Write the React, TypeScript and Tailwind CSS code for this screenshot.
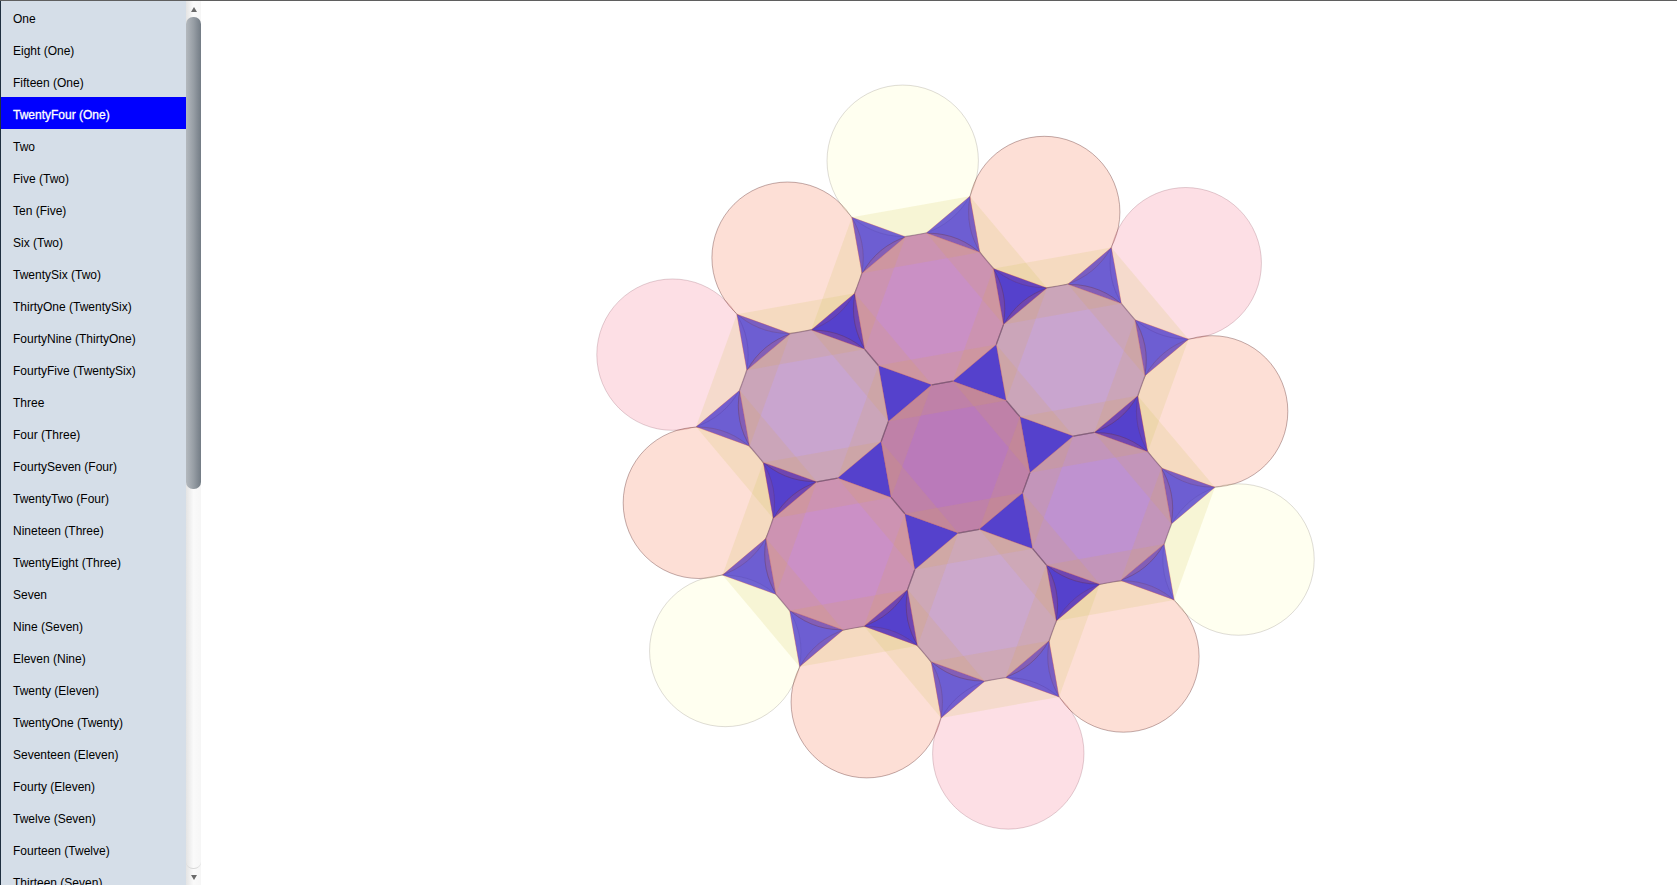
import React from 'react'

// lattice of the tiling, measured off the screenshot
const CX = 955.5
const CY = 457.1
const STEP = 150.5
const ROT = 19.9
const DELTA = 8
const R = STEP / 2 / Math.cos((DELTA * Math.PI) / 180)

type Pt = [number, number]

const polar = (c: Pt, r: number, deg: number): Pt => [
  c[0] + r * Math.cos((deg * Math.PI) / 180),
  c[1] + r * Math.sin((deg * Math.PI) / 180),
]
const pts = (list: Pt[]) => list.map((p) => `${p[0].toFixed(2)},${p[1].toFixed(2)}`).join(' ')

const AXES: Pt[] = [
  [1, 0],
  [0, 1],
  [-1, 1],
  [-1, 0],
  [0, -1],
  [1, -1],
]
const dirOf = (k: number) => ROT + 60 * k

function center(i: number, j: number): Pt {
  const a = polar([0, 0], STEP, ROT)
  const b = polar([0, 0], STEP, ROT + 60)
  return [CX + a[0] * i + b[0] * j, CY + a[1] * i + b[1] * j]
}
const ring = (i: number, j: number) => Math.max(Math.abs(i), Math.abs(j), Math.abs(i + j))
const key = (i: number, j: number) => `${i}:${j}`

type Kind = 'peach' | 'pink' | 'yellow'
function outerKind(i: number, j: number): Kind {
  if ((i === 2 && j === 0) || (i === -2 && j === 2) || (i === 0 && j === -2)) return 'yellow'
  if ((i === -2 && j === 0) || (i === 0 && j === 2) || (i === 2 && j === -2)) return 'pink'
  return 'peach'
}

const KIND: Record<Kind, { fill: string; stroke: string; sliver: string; edge: string }> = {
  peach: {
    fill: 'rgba(245,95,50,0.2)',
    stroke: 'rgba(95,45,45,0.38)',
    sliver: 'rgba(245,95,50,0.1)',
    edge: 'rgba(95,45,45,0.18)',
  },
  pink: {
    fill: 'rgba(245,95,125,0.2)',
    stroke: 'rgba(120,50,70,0.22)',
    sliver: 'rgba(245,95,125,0.04)',
    edge: 'rgba(60,40,120,0.16)',
  },
  yellow: {
    fill: 'rgba(255,255,180,0.2)',
    stroke: 'rgba(90,80,70,0.2)',
    sliver: 'rgba(255,255,180,0.03)',
    edge: 'rgba(60,40,120,0.12)',
  },
}

const HEX: Record<string, string> = {
  '0:0': '#ba7aba',
  '0:-1': '#ca90c5',
  '1:-1': '#c9a5cf',
  '1:0': '#bf92d0',
  '0:1': '#cca8cc',
  '-1:1': '#cb90c6',
  '-1:0': '#c9a5cf',
}

const cells: { i: number; j: number; c: Pt; ring: number }[] = []
for (let i = -2; i <= 2; i++) {
  for (let j = -2; j <= 2; j++) {
    if (ring(i, j) <= 2) cells.push({ i, j, c: center(i, j), ring: ring(i, j) })
  }
}
const has = new Set(cells.map((c) => key(c.i, c.j)))

function dodecagon(c: Pt): Pt[] {
  const out: Pt[] = []
  for (let k = 0; k < 6; k++) {
    out.push(polar(c, R, dirOf(k) - DELTA), polar(c, R, dirOf(k) + DELTA))
  }
  return out
}

const rects: Pt[][] = []
cells.forEach((p) => {
  ;[0, 1, 2].forEach((k) => {
    const ni = p.i + AXES[k][0]
    const nj = p.j + AXES[k][1]
    if (!has.has(key(ni, nj))) return
    if (p.ring === 2 && ring(ni, nj) === 2) return
    const q = center(ni, nj)
    const phi = dirOf(k)
    rects.push([
      polar(p.c, R, phi - 60 + DELTA),
      polar(p.c, R, phi + 60 - DELTA),
      polar(q, R, phi + 180 - 60 + DELTA),
      polar(q, R, phi + 180 + 60 - DELTA),
    ])
  })
})

const tris: { v: Pt[]; core: boolean; light: boolean }[] = []
cells.forEach((p) => {
  ;[0, 1].forEach((k) => {
    const a = AXES[k]
    const b = AXES[k + 1]
    const qi = p.i + a[0]
    const qj = p.j + a[1]
    const si = p.i + b[0]
    const sj = p.j + b[1]
    if (!has.has(key(qi, qj)) || !has.has(key(si, sj))) return
    const phi = dirOf(k)
    const q = center(qi, qj)
    const rings = [p.ring, ring(qi, qj), ring(si, sj)]
    const outerCount = rings.filter((x) => x === 2).length
    tris.push({
      v: [polar(p.c, R, phi + DELTA), polar(p.c, R, phi + 60 - DELTA), polar(q, R, phi + 120 + DELTA)],
      core: rings.includes(0),
      light: outerCount === 2,
    })
  })
})

const inner = cells.filter((c) => c.ring < 2)
const outer = cells.filter((c) => c.ring === 2)

function Tiling() {
  return (
    <svg className="block h-full w-full" viewBox="201 1 1476 884">
      <defs>
        <clipPath id="cells">
          {inner.map((c) => (
            <polygon key={key(c.i, c.j)} points={pts(dodecagon(c.c))} />
          ))}
        </clipPath>
        <clipPath id="outerTris">
          {tris.filter((t) => !t.core).map((t, n) => (
            <polygon key={n} points={pts(t.v)} />
          ))}
        </clipPath>
      </defs>

      {outer.map((c) => {
        const k = KIND[outerKind(c.i, c.j)]
        return <circle key={key(c.i, c.j)} cx={c.c[0]} cy={c.c[1]} r={R - 0.3} fill={k.fill} stroke={k.stroke} />
      })}

      {rects.map((r, n) => (
        <polygon key={n} points={pts(r)} fill="rgba(205,195,85,0.17)" />
      ))}

      {inner.map((c) => (
        <polygon key={key(c.i, c.j)} points={pts(dodecagon(c.c))} fill={HEX[key(c.i, c.j)]} />
      ))}

      <g clipPath="url(#cells)">
        {rects.map((r, n) => (
          <polygon key={n} points={pts(r)} fill="rgba(215,165,75,0.16)" />
        ))}
      </g>

      {tris.map((t, n) => (
        <polygon
          key={n}
          points={pts(t.v)}
          fill={t.light ? '#6d5ed2' : '#5541cc'}
          stroke="rgba(235,70,40,0.5)"
          strokeWidth={0.5}
        />
      ))}

      <g clipPath="url(#outerTris)">
        {outer.map((c) => {
          const k = KIND[outerKind(c.i, c.j)]
          return <circle key={key(c.i, c.j)} cx={c.c[0]} cy={c.c[1]} r={R - 0.3} fill={k.sliver} stroke={k.edge} />
        })}
        {inner
          .filter((c) => c.ring === 1)
          .map((c) => (
            <circle
              key={key(c.i, c.j)}
              cx={c.c[0]}
              cy={c.c[1]}
              r={R - 0.3}
              fill="rgba(245,95,50,0.17)"
              stroke="rgba(95,45,45,0.3)"
            />
          ))}
      </g>

      {inner.map((c) =>
        [0, 1, 2, 3, 4, 5].map((k) => {
          const a = polar(c.c, R, dirOf(k) - DELTA)
          const b = polar(c.c, R, dirOf(k) + DELTA)
          return (
            <line
              key={`${key(c.i, c.j)}-${k}`}
              x1={a[0]}
              y1={a[1]}
              x2={b[0]}
              y2={b[1]}
              stroke="rgba(95,60,90,0.42)"
              strokeWidth={1.2}
            />
          )
        }),
      )}
    </svg>
  )
}

const ITEMS = [
  'One',
  'Eight (One)',
  'Fifteen (One)',
  'TwentyFour (One)',
  'Two',
  'Five (Two)',
  'Ten (Five)',
  'Six (Two)',
  'TwentySix (Two)',
  'ThirtyOne (TwentySix)',
  'FourtyNine (ThirtyOne)',
  'FourtyFive (TwentySix)',
  'Three',
  'Four (Three)',
  'FourtySeven (Four)',
  'TwentyTwo (Four)',
  'Nineteen (Three)',
  'TwentyEight (Three)',
  'Seven',
  'Nine (Seven)',
  'Eleven (Nine)',
  'Twenty (Eleven)',
  'TwentyOne (Twenty)',
  'Seventeen (Eleven)',
  'Fourty (Eleven)',
  'Twelve (Seven)',
  'Fourteen (Twelve)',
  'Thirteen (Seven)',
]

function Scrollbar() {
  return (
    <div className="flex h-full w-[15px] shrink-0 flex-col bg-gradient-to-r from-[#e4e4e4] via-[#fafafa] to-[#f6f6f6]">
      <div className="flex h-[16px] items-center justify-center">
        <div className="h-0 w-0 border-x-[3px] border-b-[5px] border-x-transparent border-b-[#6a6a6a]" />
      </div>
      <div className="h-[472px] rounded-[7px] bg-gradient-to-r from-[#b4b9be] via-[#979ea5] to-[#737c85]" />
      <div className="flex-1 rounded-b-[7px] border-b border-[#d8d8d8]" />
      <div className="flex h-[16px] items-center justify-center">
        <div className="h-0 w-0 border-x-[3px] border-t-[5px] border-x-transparent border-t-[#6a6a6a]" />
      </div>
    </div>
  )
}

export default function App() {
  return (
    <div className="flex h-screen w-full overflow-hidden border-t border-[#5f5f5f] bg-white font-['Liberation_Sans',Arial,sans-serif]">
      <div className="flex h-full w-[201px] shrink-0 border-l border-[#1f2f3f]">
        <ul className="h-full w-[185px] shrink-0 overflow-hidden bg-[#d5dee8]">
          {ITEMS.map((item) => (
            <li
              key={item}
              className={
                item === 'TwentyFour (One)'
                  ? 'flex h-[32px] items-center bg-[#0000ff] pl-[12px] pt-[4px] text-[12px] text-white [-webkit-text-stroke:0.3px_#ffffff]'
                  : 'flex h-[32px] items-center pl-[12px] pt-[4px] text-[12px] text-black'
              }
            >
              {item}
            </li>
          ))}
        </ul>
        <Scrollbar />
      </div>
      <main className="min-w-0 flex-1">
        <Tiling />
      </main>
    </div>
  )
}
